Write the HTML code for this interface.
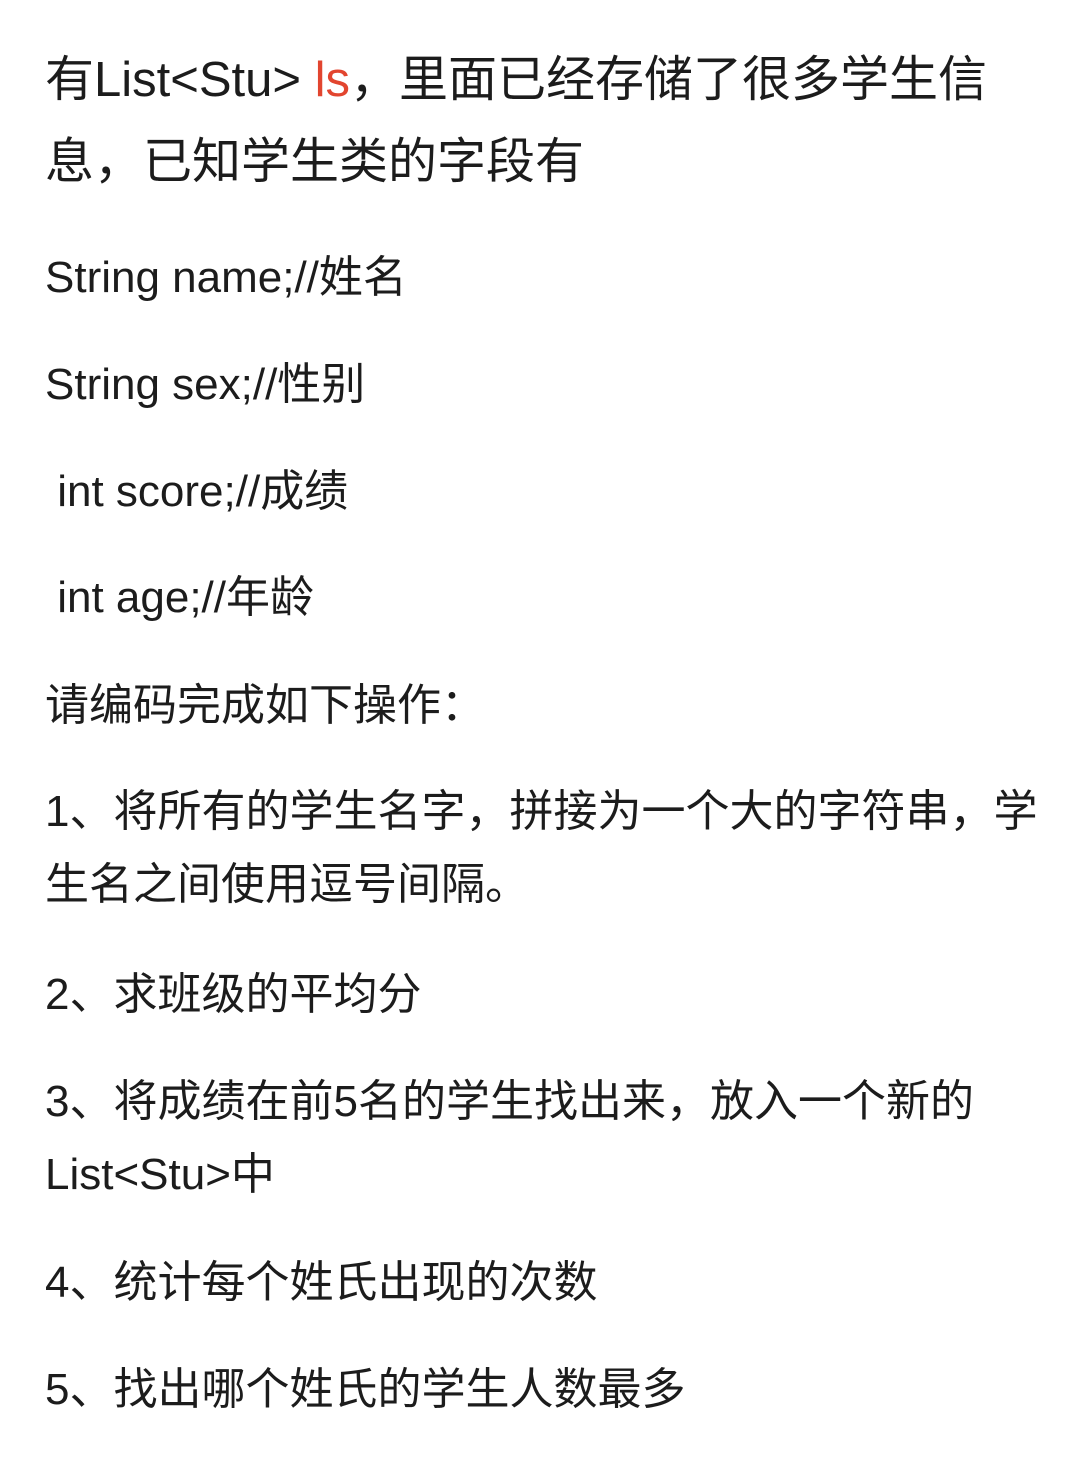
<!DOCTYPE html>
<html><head><meta charset="utf-8"><style>
html,body{margin:0;padding:0;background:#fff;}
body{width:1080px;height:1476px;position:relative;overflow:hidden;font-family:"Liberation Sans","Noto Sans CJK SC",sans-serif;color:#1c1c1c;}
.l{position:absolute;left:45px;height:60px;line-height:60px;font-size:44px;white-space:nowrap;}
.t{font-size:49px;}
.r{color:#e2452f;}
</style></head><body>
<div class="l t" style="top:50px;">有List&lt;Stu&gt; <span class="r">ls</span>，里面已经存储了很多学生信</div>
<div class="l t" style="top:132px;">息，已知学生类的字段有</div>
<div class="l" style="top:248px;">String name;//姓名</div>
<div class="l" style="top:355px;">String sex;//性别</div>
<div class="l" style="top:462px;">&nbsp;int score;//成绩</div>
<div class="l" style="top:568px;">&nbsp;int age;//年龄</div>
<div class="l" style="top:676px;">请编码完成如下操作：</div>
<div class="l" style="top:782px;">1、将所有的学生名字，拼接为一个大的字符串，学</div>
<div class="l" style="top:855px;">生名之间使用逗号间隔。</div>
<div class="l" style="top:965px;">2、求班级的平均分</div>
<div class="l" style="top:1072px;">3、将成绩在前5名的学生找出来，放入一个新的</div>
<div class="l" style="top:1145px;">List&lt;Stu&gt;中</div>
<div class="l" style="top:1253px;">4、统计每个姓氏出现的次数</div>
<div class="l" style="top:1360px;">5、找出哪个姓氏的学生人数最多</div>
</body></html>
